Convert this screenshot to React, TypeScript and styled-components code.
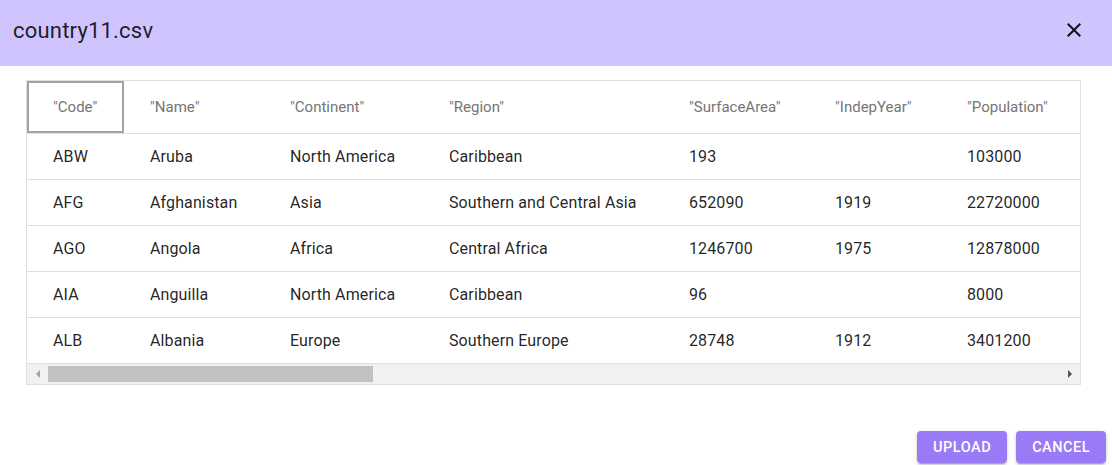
import React from "react";
import styled, { createGlobalStyle } from "styled-components";

const Global = createGlobalStyle`
  html, body { margin: 0; padding: 0; background: #fff; }
  body { font-family: Roboto, "Noto Sans", Arial, sans-serif; }
  * { box-sizing: border-box; }
`;

const Dialog = styled.div`
  width: 1112px;
  height: 465px;
  display: flex;
  flex-direction: column;
  background: #fff;
`;

const Header = styled.div`
  height: 66px;
  background: #cfc4fe;
  display: flex;
  align-items: center;
  justify-content: space-between;
  padding: 0 26px 6px 13px;
`;

const Title = styled.h2`
  margin: 0;
  font-family: Roboto, sans-serif;
  font-weight: 400;
  font-size: 22px;
  letter-spacing: 0.2px;
  color: rgba(0, 0, 0, 0.87);
`;

const CloseButton = styled.button`
  border: none;
  background: transparent;
  padding: 0;
  width: 24px;
  height: 24px;
  display: flex;
  align-items: center;
  justify-content: center;
  cursor: pointer;
`;

const Content = styled.div`
  padding: 14px 31px 0 26px;
  flex: 1;
`;

const TableFrame = styled.div`
  border: 1px solid #e0e0e0;
  width: 1055px;
  display: flex;
  flex-direction: column;
`;

const Viewport = styled.div`
  overflow: hidden;
  width: 100%;
`;

const Table = styled.table`
  border-collapse: collapse;
  table-layout: fixed;
  width: 1200px;
  font-family: Roboto, sans-serif;
`;

const Th = styled.th<{ $focused?: boolean }>`
  height: 52px;
  text-align: left;
  padding: 0 0 0 26px;
  font-weight: 400;
  font-size: 15px;
  color: #757575;
  border-bottom: 1px solid #e0e0e0;
  white-space: nowrap;
  outline: ${(p) => (p.$focused ? "2px solid #a3a3a3" : "none")};
  outline-offset: -2px;
`;

const Td = styled.td`
  height: 46px;
  padding: 0 0 0 26px;
  font-size: 16px;
  letter-spacing: 0.12px;
  color: rgba(0, 0, 0, 0.87);
  border-bottom: 1px solid #e0e0e0;
  white-space: nowrap;
`;

const LastRow = styled.tr`
  & > td { border-bottom: none; }
`;

const ScrollBar = styled.div`
  height: 21px;
  background: #f1f1f1;
  border-top: 1px solid #e0e0e0;
  display: flex;
  align-items: center;
  padding: 0 8px 0 9px;
  gap: 8px;
`;

const Arrow = styled.div<{ $dir: "left" | "right"; $active?: boolean }>`
  width: 0;
  height: 0;
  border-top: 4px solid transparent;
  border-bottom: 4px solid transparent;
  ${(p) =>
    p.$dir === "left"
      ? `border-right: 4px solid ${p.$active ? "#505050" : "#a3a3a3"};`
      : `border-left: 4px solid ${p.$active ? "#505050" : "#a3a3a3"};`}
`;

const Track = styled.div`
  flex: 1;
  height: 16px;
  display: flex;
`;

const Thumb = styled.div`
  height: 16px;
  background: #c1c1c1;
`;

const Footer = styled.div`
  display: flex;
  justify-content: flex-end;
  gap: 9px;
  padding: 0 6px 2px 0;
  height: 80px;
  align-items: flex-end;
`;

const ActionButton = styled.button`
  height: 32px;
  padding: 0 16px;
  border: none;
  border-radius: 4px;
  background: #9a7af7;
  color: #fff;
  font-family: Roboto, sans-serif;
  font-weight: 500;
  font-size: 14.5px;
  letter-spacing: 0.5px;
  text-transform: uppercase;
  box-shadow: 0 3px 1px -2px rgba(0,0,0,0.2), 0 2px 2px 0 rgba(0,0,0,0.14), 0 1px 5px 0 rgba(0,0,0,0.12);
  cursor: pointer;
`;

const columns = [
  { key: "Code", width: 97 },
  { key: "Name", width: 140 },
  { key: "Continent", width: 159 },
  { key: "Region", width: 240 },
  { key: "SurfaceArea", width: 146 },
  { key: "IndepYear", width: 132 },
  { key: "Population", width: 286 },
];

const rows = [
  ["ABW", "Aruba", "North America", "Caribbean", "193", "", "103000"],
  ["AFG", "Afghanistan", "Asia", "Southern and Central Asia", "652090", "1919", "22720000"],
  ["AGO", "Angola", "Africa", "Central Africa", "1246700", "1975", "12878000"],
  ["AIA", "Anguilla", "North America", "Caribbean", "96", "", "8000"],
  ["ALB", "Albania", "Europe", "Southern Europe", "28748", "1912", "3401200"],
];

export default function App() {
  return (
    <Dialog>
      <Global />
      <Header>
        <Title>country11.csv</Title>
        <CloseButton aria-label="close">
          <svg width="24" height="24" viewBox="0 0 24 24">
            <path d="M19 6.41 17.59 5 12 10.59 6.41 5 5 6.41 10.59 12 5 17.59 6.41 19 12 13.41 17.59 19 19 17.59 13.41 12z" fill="#111" />
          </svg>
        </CloseButton>
      </Header>
      <Content>
        <TableFrame>
          <Viewport>
            <Table>
              <colgroup>
                {columns.map((c) => (
                  <col key={c.key} style={{ width: c.width }} />
                ))}
              </colgroup>
              <thead>
                <tr>
                  {columns.map((c, i) => (
                    <Th key={c.key} $focused={i === 0}>
                      "{c.key}"
                    </Th>
                  ))}
                </tr>
              </thead>
              <tbody>
                {rows.map((r, ri) => {
                  const cells = r.map((v, ci) => <Td key={ci}>{v}</Td>);
                  return ri === rows.length - 1 ? (
                    <LastRow key={ri}>{cells}</LastRow>
                  ) : (
                    <tr key={ri}>{cells}</tr>
                  );
                })}
              </tbody>
            </Table>
          </Viewport>
          <ScrollBar>
            <Arrow $dir="left" />
            <Track>
              <Thumb style={{ width: 325 }} />
            </Track>
            <Arrow $dir="right" $active />
          </ScrollBar>
        </TableFrame>
      </Content>
      <Footer>
        <ActionButton>Upload</ActionButton>
        <ActionButton>Cancel</ActionButton>
      </Footer>
    </Dialog>
  );
}
